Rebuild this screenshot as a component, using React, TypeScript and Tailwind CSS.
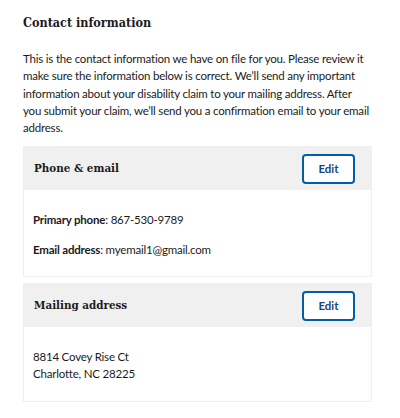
const cards = [
  {
    id: 'phone',
    title: 'Phone & email',
    lines: [
      { label: 'Primary phone', value: '867-530-9789' },
      { label: 'Email address', value: 'myemail1@gmail.com' },
    ],
  },
  {
    id: 'address',
    title: 'Mailing address',
    address: ['8814 Covey Rise Ct', 'Charlotte, NC 28225'],
  },
];

export default function App() {
  return (
    <div className="min-h-[418px] w-[400px] bg-white pl-[23px] pt-[13px] font-[family-name:Lato,sans-serif] text-[#1b1b1b]">
      <h2 className="font-[family-name:'DejaVu_Serif_Condensed','DejaVu_Serif',serif] text-[12.5px] font-bold leading-[20px]">
        Contact information
      </h2>

      <p className="mt-[17px] w-[346px] text-[11.5px] leading-[17.3px] tracking-[-0.2px]">
        This is the contact information we have on file for you. Please review it make sure the
        information below is correct. We’ll send any important information about your disability
        claim to your mailing address. After you submit your claim, we’ll send you a confirmation
        email to your email address.
      </p>

      <div className="mt-[10px] flex w-[349px] flex-col gap-[6px]">
        {cards.map((card) => (
          <div key={card.id} className="border border-[#efefef]">
            <div className="flex h-[43px] items-center justify-between bg-[#f0f0f0] pl-[10px] pr-[16px]">
              <h3 className="font-[family-name:'DejaVu_Serif_Condensed','DejaVu_Serif',serif] text-[11.5px] font-bold">
                {card.title}
              </h3>
              <button className="flex h-[30px] w-[53px] items-center justify-center rounded-[4px] border-2 border-[#005ea2] bg-white text-[11.5px] font-bold text-[#1a4480]">
                Edit
              </button>
            </div>
            <div className="bg-white pl-[9px] pt-[21px] pb-[18px] text-[11.5px] leading-[17px] tracking-[-0.2px]">
              {card.lines && (
                <div className="flex flex-col gap-[13px]">
                  {card.lines.map((l) => (
                    <p key={l.label}>
                      <span className="font-bold">{l.label}</span>: {l.value}
                    </p>
                  ))}
                </div>
              )}
              {card.address && (
                <div className="pb-[1px]">
                  {card.address.map((a) => (
                    <p key={a}>{a}</p>
                  ))}
                </div>
              )}
            </div>
          </div>
        ))}
      </div>
    </div>
  );
}
